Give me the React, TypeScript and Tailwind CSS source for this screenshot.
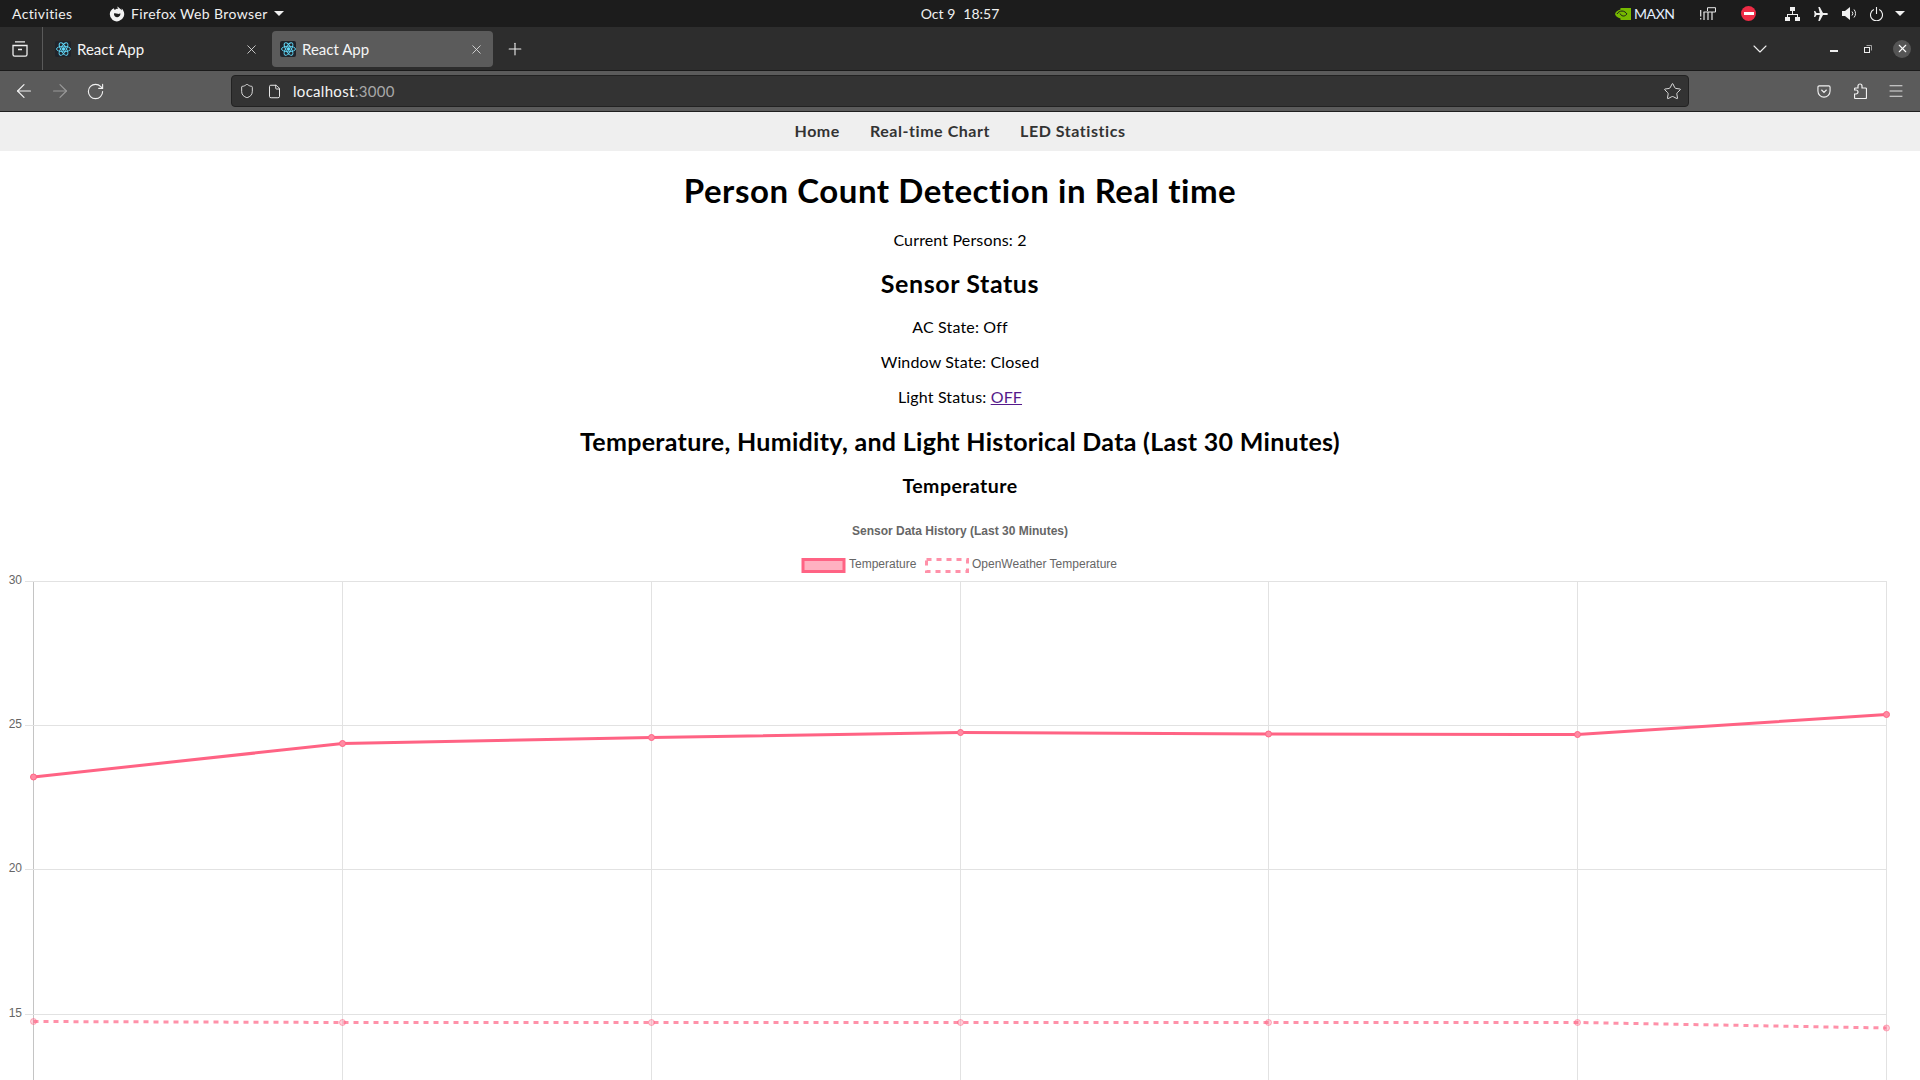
import { ArrowLeft, ArrowRight, ChevronDown, File, Menu, Plus, RotateCw, Shield, Star, X } from "lucide-react";

const gridX = [33.5, 342.5, 651.5, 960.5, 1268.5, 1577.5, 1886.5];
const gridY = [
  { label: "30", y: 581 },
  { label: "25", y: 725 },
  { label: "20", y: 869 },
  { label: "15", y: 1014 },
];
const temp = [777, 743.5, 737.5, 732.5, 734, 734.5, 714.5];
const openWeather = [1021.5, 1022.5, 1022.5, 1022.5, 1022.5, 1022.5, 1028];

const line = (values: number[]) => values.map((y, i) => `${gridX[i]},${y}`).join(" ");

function Favicon() {
  return (
    <span className="w-[16px] h-[16px] rounded-[2px] bg-[#20232a] flex items-center justify-center shrink-0">
      <svg width="15" height="14" viewBox="0 0 30 28" fill="none" stroke="#61dafb" strokeWidth="1.800">
        <ellipse cx="15" cy="14" rx="14" ry="5.500" />
        <ellipse cx="15" cy="14" rx="14" ry="5.500" transform="rotate(60 15 14)" />
        <ellipse cx="15" cy="14" rx="14" ry="5.500" transform="rotate(120 15 14)" />
        <circle cx="15" cy="14" r="2.800" fill="#61dafb" />
      </svg>
    </span>
  );
}

function Tab({ active }: { active?: boolean }) {
  return (
    <div className={`h-[36px] w-[221px] mt-[1px] rounded-[4px] flex items-center pl-[8px] pr-[9px] gap-[6px] ${active ? "bg-[#5b5b5b]" : ""}`}>
      <Favicon />
      <span className="text-[15px] text-[#f5f5f5] flex-1">React App</span>
      <X size={15} strokeWidth={1.3} className="text-[#e8e8e8]" />
    </div>
  );
}

function FirefoxLogo() {
  return (
    <svg width="16" height="16" viewBox="0 0 16 16">
      <path d="M8.500 .5c-.3 1.300.6 2.100 1.500 2.500-1.500-.4-3.200 0-4.200 1-.5-.4-.8-1-.9-1.700C2.300 3.500.8 5.600.8 8.200a7.200 7.200 0 1 0 13.400-3.700c-.4-.8-1-1.500-1.600-1.900.2.700.2 1.300 0 1.700C11.800 3 10 2 8.500.5Z" fill="#f2f2f2" />
      <path d="M5 7.500a3.200 3.200 0 1 0 6.200-.5c-.5.900-1.500 1.100-2.600.8C7.400 7.500 6 7 5 7.500Z" fill="#1c1c1c" />
    </svg>
  );
}

function NvidiaLogo() {
  return (
    <svg width="16" height="12" viewBox="0 0 16 12">
      <path d="M5.500 0H16v12H5.500v-1.500C2.500 10 .5 8 0 6c.5-2 2.500-4 5.500-4.500Z" fill="#76b900" />
      <path d="M2 6c1-1.800 3-3 5-3 2.200 0 4 1.500 5 3-1 1-2 2-3.500 2C6.500 8 5.500 6.500 5 5.500" fill="none" stroke="#1c1c1c" strokeWidth="1" />
    </svg>
  );
}

function TopBar() {
  return (
    <div className="h-[27px] bg-[#1c1c1c] text-[#f0f0f0] text-[14px] grid grid-cols-[1fr_auto_1fr] items-center shrink-0">
      <div className="flex items-center pl-[12px] tracking-[0.37px]">
        <span className="w-[97px]">Activities</span>
        <FirefoxLogo />
        <span className="ml-[6px] w-[143px]">Firefox Web Browser</span>
        <span className="w-0 h-0 border-x-[5px] border-x-transparent border-t-[5px] border-t-[#f0f0f0]" />
      </div>
      <div className="flex gap-[8px]">
        <span>Oct 9</span>
        <span>18:57</span>
      </div>
      <div className="flex items-center justify-end">
        <NvidiaLogo />
        <span className="ml-[3px] w-[41px] text-[14px] tracking-[-0.4px] text-[#e4f0ff]">MAXN</span>
        <svg className="ml-[25px]" width="16" height="13" viewBox="0 0 16 13" fill="none" stroke="#e6e6e6" strokeWidth="1.200">
          <path d="M.7 3v6.500M.7 11v1.500M4 5v8M8 5v8M12 5v8" />
          <path d="M7.500 4V.7h8V5H3.500" strokeWidth="1" />
        </svg>
        <span className="ml-[25px] w-[15px] h-[15px] rounded-full bg-[#ed2b45] flex items-center justify-center">
          <span className="w-[10px] h-[2.500px] bg-white" />
        </span>
        <svg className="ml-[29px]" width="15" height="14" viewBox="0 0 15 14" fill="#f0f0f0">
          <rect x="5" y="0" width="5" height="4" />
          <rect x="0" y="10" width="5" height="4" />
          <rect x="10" y="10" width="5" height="4" />
          <path d="M7 4h1v3h5v3h-1V8H3v2H2V7h5Z" />
        </svg>
        <svg className="ml-[14px]" width="14" height="14" viewBox="0 0 14 14" fill="#f0f0f0">
          <path d="M14 7c0-.7-.8-1.100-1.800-1.100H9L5.800 0H4.300l1.500 5.900H2.500L1.200 4H0l.6 3L0 10h1.200l1.300-1.900h3.300L4.300 14h1.500L9 8.100h3.200C13.200 8.100 14 7.700 14 7Z" />
        </svg>
        <svg className="ml-[14px]" width="15" height="13" viewBox="0 0 15 13" fill="none" stroke="#f0f0f0">
          <path d="M0 4h3l5-4v13L3 9H0Z" fill="#f0f0f0" stroke="none" />
          <path d="M10 4.500a3 3 0 0 1 0 4M12 2.500a6 6 0 0 1 0 8" />
        </svg>
        <svg className="ml-[13px]" width="13" height="14" viewBox="0 0 13 14" fill="none" stroke="#f0f0f0" strokeWidth="1.100">
          <path d="M3.800 2.500a6 6 0 1 0 5.400 0M6.500 0v7" />
        </svg>
        <span className="ml-[12px] mr-[15px] w-0 h-0 border-x-[5px] border-x-transparent border-t-[5px] border-t-[#f0f0f0]" />
      </div>
    </div>
  );
}

function TabBar() {
  return (
    <div className="h-[44px] bg-[#2d2d2d] border-b border-[#1a1a1a] flex items-center shrink-0">
      <div className="w-[43px] h-full flex items-center pl-[12px] border-r border-[#5a5a5a]">
        <svg width="16" height="16" viewBox="0 0 16 16" fill="none" stroke="#eeeeee" strokeWidth="1.300">
          <path d="M3 .8h10M1 4.500h14v9a1.700 1.700 0 0 1-1.700 1.700H2.700A1.700 1.700 0 0 1 1 13.500ZM6 8.500h4" />
        </svg>
      </div>
      <div className="ml-[4px] w-[225px]"><Tab /></div>
      <Tab active />
      <Plus size={20} className="ml-[12px] mt-[1px] text-[#f0f0f0]" strokeWidth={1.300} />
      <div className="flex-1" />
      <ChevronDown size={24} className="text-[#eeeeee]" strokeWidth={1.100} />
      <span className="ml-[58px] w-[8px] h-[1.500px] bg-[#eeeeee] mt-[5px]" />
      <svg className="ml-[26px]" width="8" height="8" viewBox="0 0 8 8" fill="none" stroke="#eeeeee">
        <rect x=".5" y="2.500" width="5" height="5" />
        <path d="M2.500 .5h5v5" strokeOpacity=".6" />
      </svg>
      <span className="ml-[21px] mr-[9px] w-[18px] h-[18px] rounded-full bg-[#555555] flex items-center justify-center">
        <X size={13} className="text-white" />
      </span>
    </div>
  );
}

function Toolbar() {
  return (
    <div className="h-[41px] bg-[#5b5b5b] border-b border-[#1f1f1f] flex items-center shrink-0">
      <ArrowLeft size={22} className="ml-[13px] text-[#f2f2f2]" strokeWidth={1.300} />
      <ArrowRight size={22} className="ml-[14px] text-[#9a9a9a]" strokeWidth={1.300} />
      <RotateCw size={19} className="ml-[15px] text-[#f2f2f2]" strokeWidth={1.400} />
      <div className="ml-[126px] w-[1458px] h-[32px] rounded-[4px] bg-[#333333] border border-[#222222] flex items-center">
        <Shield size={16} className="ml-[7px] text-[#f2f2f2]" strokeWidth={1.300} />
        <File size={15} className="ml-[12px] text-[#f2f2f2]" strokeWidth={1.500} />
        <span className="ml-[11px] text-[15px] tracking-[0.3px] text-[#f5f5f5]">
          localhost<span className="text-[#a8a8a8]">:3000</span>
        </span>
        <div className="flex-1" />
        <Star size={19} className="mr-[6px] text-[#f2f2f2]" strokeWidth={1.100} />
      </div>
      <svg className="ml-[128px]" width="14" height="13" viewBox="0 0 16 15" fill="none" stroke="#f2f2f2" strokeWidth="1.300">
        <path d="M2.500 1h11A1.500 1.500 0 0 1 15 2.500V7a7 7 0 0 1-14 0V2.500A1.500 1.500 0 0 1 2.500 1ZM5 5.500 8 8.500l3-3" />
      </svg>
      <svg className="ml-[23px]" width="13" height="16" viewBox="0 0 13 16" fill="none" stroke="#f2f2f2" strokeWidth="1.200">
        <path d="M4 5V3a2 2 0 1 1 4 0v2h3.500a1 1 0 0 1 1 1v8.500a1 1 0 0 1-1 1H1.500a1 1 0 0 1-1-1V11H2a2 2 0 1 0 0-4H.5V6a1 1 0 0 1 1-1Z" />
      </svg>
      <Menu size={18} className="ml-[20px] text-[#f2f2f2]" strokeWidth={1.200} />
    </div>
  );
}

function Chart() {
  return (
    <svg className="block mt-[9px]" width="1920" height="574" viewBox="0 506 1920 574" fontFamily="'Liberation Sans', Arial, sans-serif">
      <text x="960" y="535" textAnchor="middle" fontSize="12" fontWeight="700" fill="#666666">Sensor Data History (Last 30 Minutes)</text>

      <rect x="803" y="559.500" width="41" height="12" fill="rgba(255,99,132,0.5)" stroke="#ff6384" strokeWidth="3" />
      <text x="849" y="568" fontSize="12" fill="#666666">Temperature</text>
      <rect x="926.500" y="559.500" width="41" height="12" fill="none" stroke="rgba(255,99,132,0.7)" strokeWidth="3" strokeDasharray="5 5" />
      <text x="972" y="568" fontSize="12" fill="#666666">OpenWeather Temperature</text>

      {gridX.map((x, i) => (
        <line key={x} x1={x} x2={x} y1={581} y2={1080} stroke={i === 0 ? "#c4c4c4" : "#e2e2e2"} />
      ))}
      {gridY.map((g) => (
        <g key={g.label}>
          <line x1={25} x2={1887} y1={g.y + 0.5} y2={g.y + 0.5} stroke="#e2e2e2" />
          <text x="22" y={g.y + 3} textAnchor="end" fontSize="12" fill="#666666">{g.label}</text>
        </g>
      ))}

      <polyline points={line(temp)} fill="none" stroke="#ff6384" strokeWidth="3" />
      {temp.map((y, i) => (
        <circle key={i} cx={gridX[i]} cy={y} r="3" fill="#ff8ba3" stroke="#ff6384" />
      ))}
      <polyline points={line(openWeather)} fill="none" stroke="rgba(255,99,132,0.7)" strokeWidth="3" strokeDasharray="5 5" />
      {openWeather.map((y, i) => (
        <circle key={i} cx={gridX[i]} cy={y} r="3" fill="rgba(255,99,132,0.3)" stroke="rgba(255,99,132,0.5)" />
      ))}
    </svg>
  );
}

export default function App() {
  return (
    <div className="w-[1920px] h-[1080px] overflow-hidden bg-white flex flex-col font-['Lato','Noto_Sans',sans-serif]">
      <TopBar />
      <TabBar />
      <Toolbar />
      <nav className="h-[39px] pb-[2px] bg-[#efefef] flex items-center justify-center gap-[30px] text-[16px] tracking-[0.55px] font-bold text-[#333333] shrink-0">
        <span>Home</span>
        <span>Real-time Chart</span>
        <span>LED Statistics</span>
      </nav>
      <main className="text-center text-black">
        <h1 className="mt-[21px] text-[33px] tracking-[0.55px] leading-[37px] font-bold">Person Count Detection in Real time</h1>
        <p className="mt-[21px] text-[16px] tracking-[0.15px] leading-[19px]">Current Persons: 2</p>
        <h2 className="mt-[20px] text-[25px] tracking-[0.58px] leading-[28px] font-bold">Sensor Status</h2>
        <p className="mt-[20px] text-[16px] tracking-[0.15px] leading-[19px]">AC State: Off</p>
        <p className="mt-[16px] text-[16px] tracking-[0.15px] leading-[19px]">Window State: Closed</p>
        <p className="mt-[16px] text-[16px] tracking-[0.15px] leading-[19px]">
          Light Status: <a className="underline text-[#551a8b]">OFF</a>
        </p>
        <h2 className="mt-[21px] text-[25px] tracking-[0.3px] leading-[28px] font-bold">Temperature, Humidity, and Light Historical Data (Last 30 Minutes)</h2>
        <h3 className="mt-[20px] text-[19.500px] tracking-[0.45px] leading-[22px] font-bold">Temperature</h3>
        <Chart />
      </main>
    </div>
  );
}
